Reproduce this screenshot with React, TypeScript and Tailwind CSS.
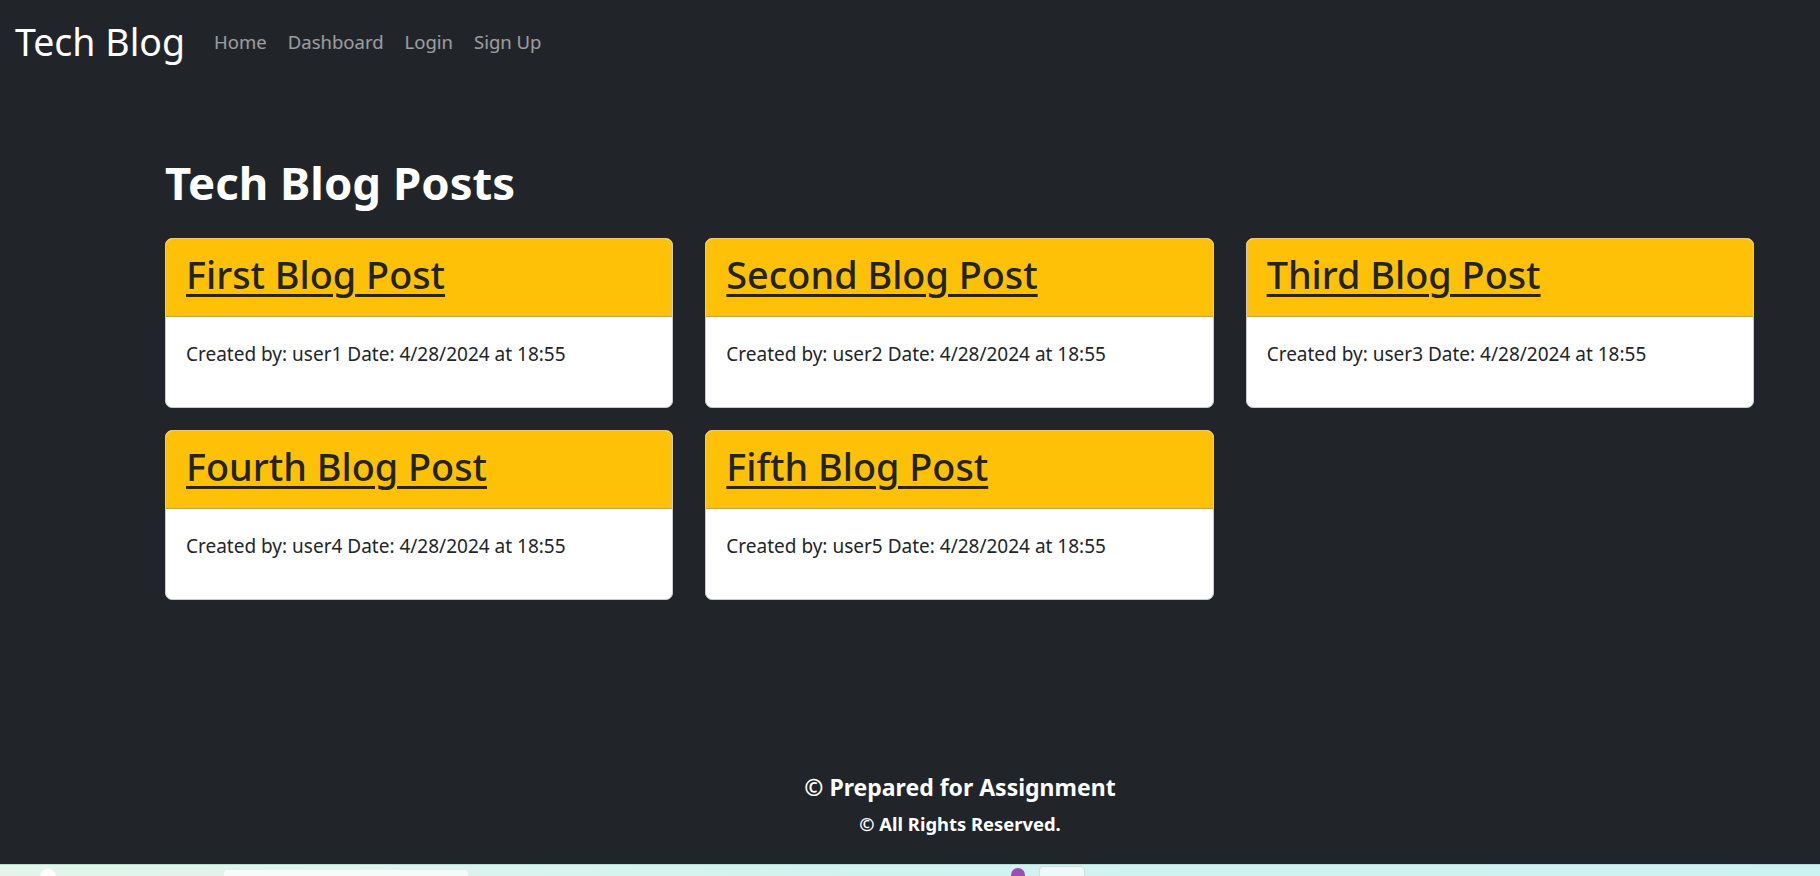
const posts = [
  { title: 'First Blog Post', user: 'user1' },
  { title: 'Second Blog Post', user: 'user2' },
  { title: 'Third Blog Post', user: 'user3' },
  { title: 'Fourth Blog Post', user: 'user4' },
  { title: 'Fifth Blog Post', user: 'user5' },
]

function PostCard({ title, user }: { title: string; user: string }) {
  return (
    <div className="rounded-[7px] border border-[#c9cacb] bg-white overflow-hidden">
      <div className="bg-[#ffc107] border-b border-[#d9a507] pl-[20px] pt-[12px] pb-[17px]">
        <a href="#" className="text-[37.8px] leading-[48px] font-medium text-[#212529] underline decoration-[3px] underline-offset-[5px]">
          {title}
        </a>
      </div>
      <div className="pl-[20px] pt-[23px] pb-[39px]">
        <p className="text-[19px] leading-[28px] text-[#212529]">
          Created by: {user} Date: 4/28/2024 at 18:55
        </p>
      </div>
    </div>
  )
}

export default function App() {
  return (
    <div className="h-[876px] flex flex-col bg-[#212529] font-['Noto_Sans','Open_Sans',sans-serif]">
      <nav className="h-[83px] flex items-center pl-[15px]">
        <a href="#" className="text-[37.5px] leading-[54px] text-white">Tech Blog</a>
        <ul className="flex items-center gap-[21px] ml-[29px]">
          {['Home', 'Dashboard', 'Login', 'Sign Up'].map((item) => (
            <li key={item}>
              <a href="#" className="text-[18.5px] leading-[27px] text-white/55">{item}</a>
            </li>
          ))}
        </ul>
      </nav>

      <main className="pl-[165px] pr-[66px]">
        <h1 className="mt-[72px] mb-[29px] text-[45.5px] leading-[54px] font-bold text-white">Tech Blog Posts</h1>
        <div className="grid grid-cols-3 gap-x-[32px] gap-y-[22px]">
          {posts.map((post) => (
            <PostCard key={post.user} title={post.title} user={post.user} />
          ))}
        </div>
      </main>

      <footer className="mt-auto pl-[100px] pb-[28px] text-center text-white font-bold">
        <p className="text-[23px] leading-[30px]">© Prepared for Assignment</p>
        <p className="mt-[10px] text-[18.4px] leading-[24px]">© All Rights Reserved.</p>
      </footer>

      <div className="relative h-[12px] border-t border-[#b9dcd8] bg-gradient-to-r from-[#e3f5ea] via-[#d0f3f0] to-[#cdf2f2]">
        <div className="absolute left-[40px] top-[4px] w-[16px] h-[8px] rounded-t-full bg-white" />
        <div className="absolute left-[224px] top-[5px] w-[244px] h-[7px] rounded-t-[4px] bg-white/70" />
        <div className="absolute left-[1011px] top-[3px] w-[14px] h-[9px] rounded-t-full bg-[#9b4fb0]" />
        <div className="absolute left-[1039px] top-[1px] w-[46px] h-[11px] rounded-t-[4px] border border-[#c7e2e0] bg-[#eefafa]" />
      </div>
    </div>
  )
}
